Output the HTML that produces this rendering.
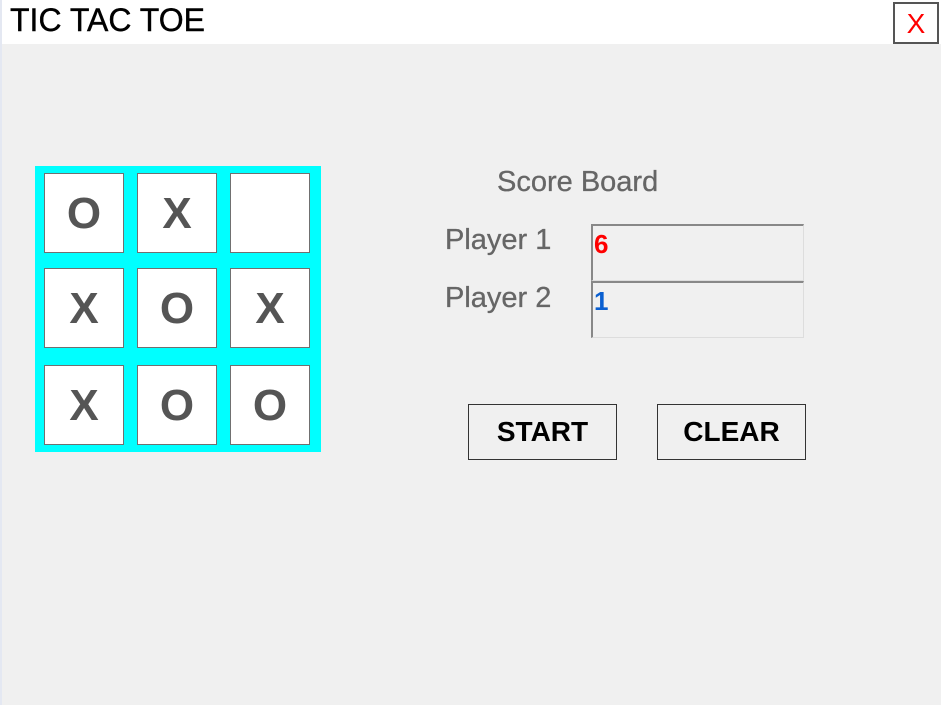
<!DOCTYPE html>
<html><head><style>
html,body{margin:0;padding:0;width:941px;height:705px;overflow:hidden;background:#f0f0f0;font-family:"Liberation Sans",Arial,sans-serif;position:relative}
.a{position:absolute}
#title{left:0;top:0;width:941px;height:44px;background:#fff}
#strip{left:0;top:0;width:2px;height:705px;background:#e4e8f2}
.t{left:10px;top:2px;font-size:32px;color:#000;-webkit-text-stroke:0.4px #000}
.close{left:893px;top:2px;width:42px;height:38px;border:2px solid #555;background:#fff;color:#f00;font-size:28px;text-align:center;line-height:40px}
.grid{left:35px;top:166px;width:286px;height:286px;background:#00ffff}
.c{width:78px;height:78px;border:1px solid #707070;background:#fff;color:#555;font-weight:bold;font-size:44px;text-align:center;line-height:80px}
.lbl{color:#666;font-size:29px;-webkit-text-stroke:0.3px #666;white-space:nowrap}
.box{width:213px;border-top:2px solid #888;border-left:2px solid #888;border-bottom:1px solid #ddd;border-right:1px solid #ddd;background:#f0f0f0;font-weight:bold;font-size:26px;line-height:36px;padding-left:1px;box-sizing:border-box}
.btn{height:56px;border:1px solid #333;background:#f0f0f0;box-sizing:border-box;font-size:28px;font-weight:bold;text-align:center;line-height:54px;color:#000}
</style></head><body>
<div class="a" id="title"></div>
<div class="a" id="strip"></div>
<div class="a t">TIC TAC TOE</div>
<div class="a close">X</div>
<div class="a grid"></div>
<div class="a c" style="left:44px;top:173px">O</div>
<div class="a c" style="left:137px;top:173px">X</div>
<div class="a c" style="left:230px;top:173px"></div>
<div class="a c" style="left:44px;top:268px">X</div>
<div class="a c" style="left:137px;top:268px">O</div>
<div class="a c" style="left:230px;top:268px">X</div>
<div class="a c" style="left:44px;top:365px">X</div>
<div class="a c" style="left:137px;top:365px">O</div>
<div class="a c" style="left:230px;top:365px">O</div>
<div class="a lbl" style="left:497px;top:166px">Score Board</div>
<div class="a lbl" style="left:445px;top:224px">Player 1</div>
<div class="a lbl" style="left:445px;top:282px">Player 2</div>
<div class="a box" style="left:591px;top:224px;height:57px;color:#f00">6</div>
<div class="a box" style="left:591px;top:281px;height:57px;color:#0a5fd0">1</div>
<div class="a btn" style="left:468px;top:404px;width:149px">START</div>
<div class="a btn" style="left:657px;top:404px;width:149px">CLEAR</div>
</body></html>
